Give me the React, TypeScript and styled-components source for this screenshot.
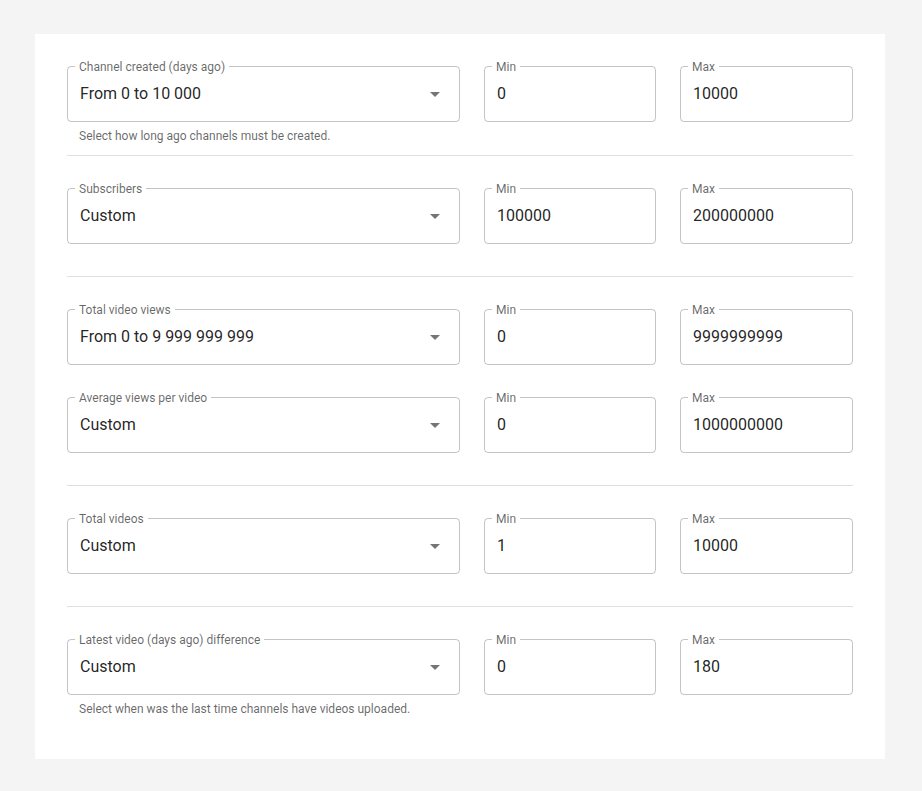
import styled, { createGlobalStyle } from 'styled-components'

const Global = createGlobalStyle`
  body {
    margin: 0;
    background: #f4f4f4;
    font-family: Roboto, "Liberation Sans", sans-serif;
  }
`

const Card = styled.div`
  width: 850px;
  margin: 34px 0 0 35px;
  background: #fff;
  padding: 0 32px 40px;
  box-sizing: border-box;
`

const Section = styled.div<{ $helper?: boolean; $last?: boolean }>`
  padding: 32px 0 ${({ $helper }) => ($helper ? '9px' : '32px')};
  border-bottom: ${({ $last }) => ($last ? 'none' : '1px solid rgba(0, 0, 0, 0.12)')};
  ${({ $last, $helper }) => ($last && $helper ? 'padding-bottom: 0;' : '')}
`

const Rows = styled.div`
  display: flex;
  flex-direction: column;
  gap: 32px;
`

const Row = styled.div`
  display: grid;
  grid-template-columns: 393px 172px 173px;
  gap: 24px;
`

const Field = styled.div`
  position: relative;
  height: 56px;
  box-sizing: border-box;
  border: 1px solid rgba(0, 0, 0, 0.23);
  border-radius: 4px;
  display: flex;
  align-items: center;
  padding: 0 12px 2px;
  font-size: 16px;
  color: rgba(0, 0, 0, 0.87);
`

const Label = styled.span`
  position: absolute;
  top: -7px;
  left: 7px;
  padding: 0 4px;
  background: #fff;
  font-size: 12px;
  line-height: 14px;
  color: rgba(0, 0, 0, 0.6);
  white-space: nowrap;
`

const Value = styled.span`
  flex: 1;
`

const Arrow = styled.span`
  width: 0;
  height: 0;
  margin: 2px 7px 0 0;
  border-left: 5px solid transparent;
  border-right: 5px solid transparent;
  border-top: 5px solid rgba(0, 0, 0, 0.54);
`

const Helper = styled.div`
  margin: 4px 0 0 12px;
  font-size: 12px;
  line-height: 20px;
  color: rgba(0, 0, 0, 0.6);
`

type Filter = { label: string; value: string; min: string; max: string }
type Group = { filters: Filter[]; helper?: string }

const groups: Group[] = [
  {
    filters: [{ label: 'Channel created (days ago)', value: 'From 0 to 10 000', min: '0', max: '10000' }],
    helper: 'Select how long ago channels must be created.',
  },
  { filters: [{ label: 'Subscribers', value: 'Custom', min: '100000', max: '200000000' }] },
  {
    filters: [
      { label: 'Total video views', value: 'From 0 to 9 999 999 999', min: '0', max: '9999999999' },
      { label: 'Average views per video', value: 'Custom', min: '0', max: '1000000000' },
    ],
  },
  { filters: [{ label: 'Total videos', value: 'Custom', min: '1', max: '10000' }] },
  {
    filters: [{ label: 'Latest video (days ago) difference', value: 'Custom', min: '0', max: '180' }],
    helper: 'Select when was the last time channels have videos uploaded.',
  },
]

const FilterRow = ({ f }: { f: Filter }) => (
  <Row>
    <Field>
      <Label>{f.label}</Label>
      <Value>{f.value}</Value>
      <Arrow />
    </Field>
    <Field>
      <Label>Min</Label>
      <Value>{f.min}</Value>
    </Field>
    <Field>
      <Label>Max</Label>
      <Value>{f.max}</Value>
    </Field>
  </Row>
)

export default function App() {
  return (
    <>
      <Global />
      <Card>
        {groups.map((g, i) => (
          <Section key={i} $helper={!!g.helper} $last={i === groups.length - 1}>
            <Rows>
              {g.filters.map(f => (
                <FilterRow key={f.label} f={f} />
              ))}
            </Rows>
            {g.helper && <Helper>{g.helper}</Helper>}
          </Section>
        ))}
      </Card>
    </>
  )
}
